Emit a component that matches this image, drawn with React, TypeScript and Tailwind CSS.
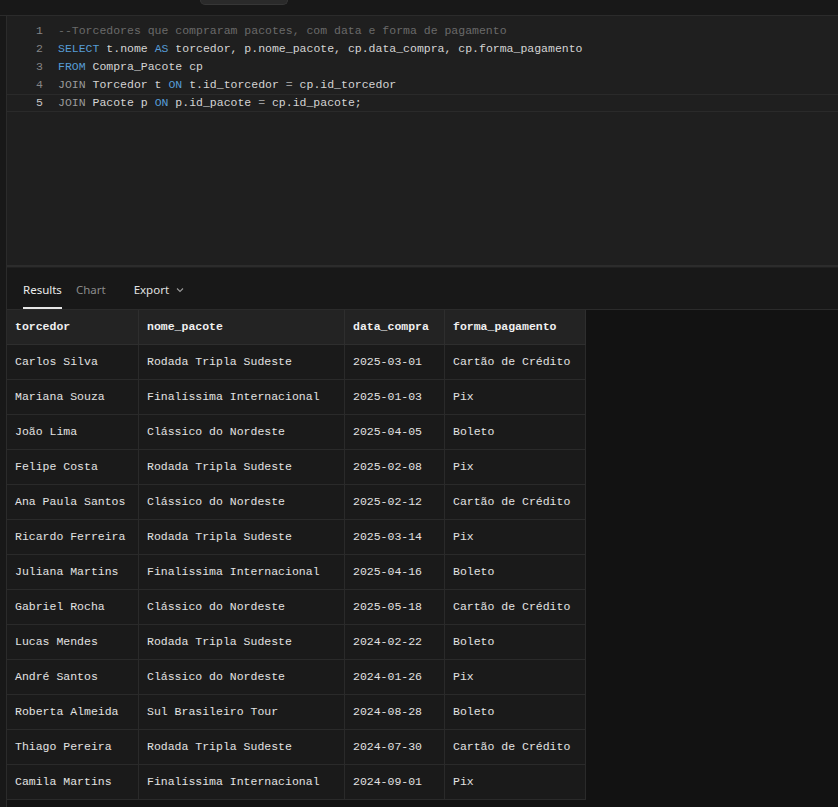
import React from 'react';

const mono = { fontFamily: '"Liberation Mono", "DejaVu Sans Mono", monospace' };

const rows: [string, string, string, string][] = [
  ['Carlos Silva', 'Rodada Tripla Sudeste', '2025-03-01', 'Cartão de Crédito'],
  ['Mariana Souza', 'Finalíssima Internacional', '2025-01-03', 'Pix'],
  ['João Lima', 'Clássico do Nordeste', '2025-04-05', 'Boleto'],
  ['Felipe Costa', 'Rodada Tripla Sudeste', '2025-02-08', 'Pix'],
  ['Ana Paula Santos', 'Clássico do Nordeste', '2025-02-12', 'Cartão de Crédito'],
  ['Ricardo Ferreira', 'Rodada Tripla Sudeste', '2025-03-14', 'Pix'],
  ['Juliana Martins', 'Finalíssima Internacional', '2025-04-16', 'Boleto'],
  ['Gabriel Rocha', 'Clássico do Nordeste', '2025-05-18', 'Cartão de Crédito'],
  ['Lucas Mendes', 'Rodada Tripla Sudeste', '2024-02-22', 'Boleto'],
  ['André Santos', 'Clássico do Nordeste', '2024-01-26', 'Pix'],
  ['Roberta Almeida', 'Sul Brasileiro Tour', '2024-08-28', 'Boleto'],
  ['Thiago Pereira', 'Rodada Tripla Sudeste', '2024-07-30', 'Cartão de Crédito'],
  ['Camila Martins', 'Finalíssima Internacional', '2024-09-01', 'Pix'],
];

const cols = [
  { name: 'torcedor', w: 'w-[132px]' },
  { name: 'nome_pacote', w: 'w-[206px]' },
  { name: 'data_compra', w: 'w-[100px]' },
  { name: 'forma_pagamento', w: 'w-[141px]' },
];

const K = ({ children }: { children: React.ReactNode }) => <span className="text-[#569cd6]">{children}</span>;
const G = ({ children }: { children: React.ReactNode }) => <span className="text-[#9a9a9a]">{children}</span>;

export default function App() {
  return (
    <div className="w-[838px] h-[807px] bg-[#181818] flex flex-col overflow-hidden text-[#d4d4d4]">
      {/* top bar */}
      <div className="h-[16px] shrink-0 border-b border-[#2b2b2b] flex">
        <div className="ml-[200px] w-[88px] h-[5px] bg-[#2a2a2a] border-x border-b border-[#363636] rounded-b-[6px]" />
      </div>

      <div className="flex flex-1 min-h-0">
        {/* left strip */}
        <div className="w-[7px] shrink-0 border-r border-[#2b2b2b] bg-[#181818]" />

        <div className="flex-1 flex flex-col min-w-0">
          {/* editor */}
          <div className="h-[249px] shrink-0 bg-[#1f1f1f] pt-[6px] text-[11.5px]" style={mono}>
            {[
              <span className="text-[#6a6a6a]">--Torcedores que compraram pacotes, com data e forma de pagamento</span>,
              <>
                <K>SELECT</K> t.nome <K>AS</K> torcedor, p.nome_pacote, cp.data_compra, cp.forma_pagamento
              </>,
              <>
                <K>FROM</K> Compra_Pacote cp
              </>,
              <>
                <G>JOIN</G> Torcedor t <K>ON</K> t.id_torcedor <G>=</G> cp.id_torcedor
              </>,
              <>
                <G>JOIN</G> Pacote p <K>ON</K> p.id_pacote <G>=</G> cp.id_pacote;
              </>,
            ].map((line, i) => (
              <div
                key={i}
                className={`flex h-[18px] items-center whitespace-pre ${i === 4 ? 'border-y border-[#2a2a2a]' : ''}`}
              >
                <span className={`w-[36px] text-right ${i === 4 ? 'text-[#c6c6c6]' : 'text-[#858585]'}`}>{i + 1}</span>
                <span className="ml-[15px]">{line}</span>
              </div>
            ))}
          </div>

          {/* splitter */}
          <div className="h-[3px] shrink-0 bg-[#2c2c2c] border-b border-[#202020]" />

          {/* results */}
          <div className="flex-1 flex flex-col min-h-0 bg-[#181818]">
            <div
              className="h-[41px] shrink-0 flex items-end pl-[16px] text-[11.5px]"
              style={{ fontFamily: '"Noto Sans", Inter, sans-serif' }}
            >
              <div className="pb-[9px] border-b-2 border-[#e6e6e6] text-[#ececec]">Results</div>
              <div className="pb-[11px] ml-[14px] text-[#8a8a8a]">Chart</div>
              <div className="pb-[11px] ml-[28px] text-[#e0e0e0] flex items-center gap-[6px]">
                Export
                <svg width="10" height="10" viewBox="0 0 10 10" className="mt-[1px]">
                  <path d="M2 3.5 L5 6.5 L8 3.5" stroke="#9a9a9a" strokeWidth="1.1" fill="none" />
                </svg>
              </div>
            </div>

            <div className="flex-1 flex bg-[#121212] border-t border-[#2b2b2b]" style={mono}>
              <div className="flex flex-col">
                <div className="flex h-[35px] bg-[#232323] border-b border-[#2e2e2e]">
                  {cols.map((c) => (
                    <div
                      key={c.name}
                      className={`${c.w} shrink-0 px-[8px] flex items-center text-[11.5px] font-bold text-[#f0f0f0] border-r border-[#2e2e2e]`}
                    >
                      {c.name}
                    </div>
                  ))}
                </div>
                {rows.map((r, i) => (
                  <div key={i} className="flex h-[35px] bg-[#1a1a1a] border-b border-[#2a2a2a]">
                    {r.map((v, j) => (
                      <div
                        key={j}
                        className={`${cols[j].w} shrink-0 px-[8px] flex items-center text-[11.5px] text-[#e2e2e2] whitespace-nowrap border-r border-[#2a2a2a]`}
                      >
                        {v}
                      </div>
                    ))}
                  </div>
                ))}
              </div>
            </div>
          </div>
        </div>
      </div>
    </div>
  );
}
